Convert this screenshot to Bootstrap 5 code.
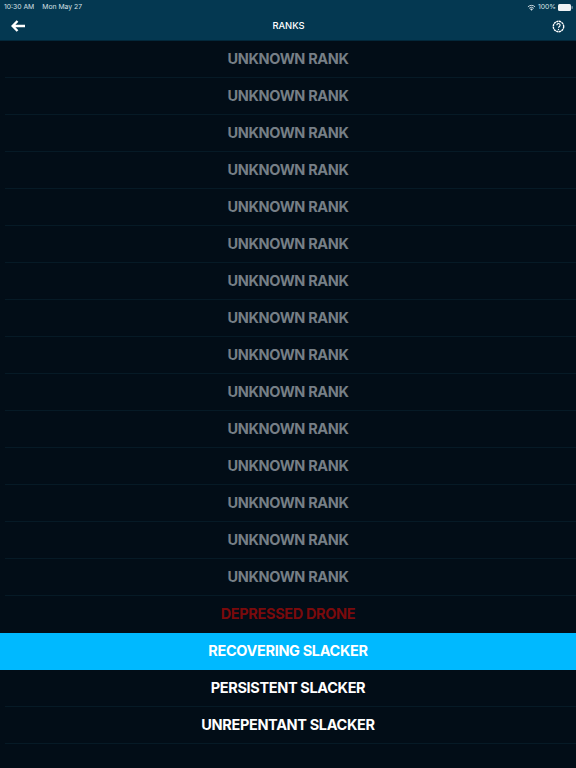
<!DOCTYPE html>
<html lang="en">
<head>
  <meta charset="UTF-8">
  <title>Ranks</title>
  <link href="https://cdn.jsdelivr.net/npm/bootstrap@5.3.0/dist/css/bootstrap.min.css" rel="stylesheet">
  <style>
    html, body { height: 100%; }
    body {
      background-color: #020d17;
      font-family: Inter, "Liberation Sans", sans-serif;
      overflow: hidden;
    }
    .top-head {
      background-color: #043851;
      height: 41px;
      border-bottom: 1px solid #03283b;
      color: #fff;
    }
    .status-line {
      height: 13px;
      padding: 1px 3px 0 4px;
      font-size: 6.8px;
      color: #d5e0e6;
    }
    .status-right { gap: 2px; }
    .title-line { height: 26px; padding: 0 11px 0 11px; }
    .page-name { font-size: 9.4px; font-weight: 500; padding-top: 1px; }
    .rank-row {
      height: 37px;
      font-size: 14.5px;
      font-weight: 700;
      letter-spacing: -0.35px;
      padding-bottom: 2px;
    }
    .rank-row::after {
      content: "";
      position: absolute;
      left: 5px;
      right: 0;
      bottom: 0;
      height: 1px;
      background-color: #061a26;
    }
    .rank-unknown { color: #767f86; }
    .rank-low { color: #7a0a0c; }
    .rank-known { color: #fff; }
    .rank-current { background-color: #00b9ff; color: #fff; }
    .rank-current::after, .rank-before::after { display: none; }
  </style>
</head>
<body>

<!-- Header -->
<div class="top-head">
  <div class="status-line d-flex align-items-center justify-content-between">
    <div class="d-flex"><span>10:30 AM</span><span class="ms-2">Mon May 27</span></div>
    <div class="d-flex align-items-center status-right">
      <svg width="9" height="7" viewBox="0 0 10 8"><path d="M5 7.6 3.4 5.9a2.3 2.3 0 0 1 3.2 0z" fill="#d5e0e6"/><path d="M2.4 4.9a3.8 3.8 0 0 1 5.2 0M.9 3.2a6 6 0 0 1 8.2 0" fill="none" stroke="#d5e0e6" stroke-width="1.1"/></svg>
      <span>100%</span>
      <svg width="15" height="7" viewBox="0 0 15 7"><rect width="13" height="7" rx="1.5" fill="#eef3f5"/><rect x="13.5" y="2.2" width="1.2" height="2.6" fill="#8fa6b2"/></svg>
    </div>
  </div>
  <div class="title-line d-flex align-items-center justify-content-between">
    <svg width="14" height="12" viewBox="0 0 14 12"><path d="M6.5 1 1.6 6l4.9 5M2 6h12" fill="none" stroke="#fff" stroke-width="2.4"/></svg>
    <span class="page-name">RANKS</span>
    <svg width="13" height="13" viewBox="0 0 13 13">
      <circle cx="6.5" cy="6.5" r="5.2" fill="none" stroke="#fff" stroke-width="1.4" stroke-dasharray="2.2 .5"/>
      <path d="M4.9 5.2a1.6 1.6 0 1 1 2.5 1.3c-.6.4-.9.7-.9 1.3" fill="none" stroke="#fff" stroke-width="1.1"/>
      <circle cx="6.5" cy="9.5" r=".7" fill="#fff"/>
    </svg>
  </div>
</div>

<!-- Rank list -->
<div id="rankList"></div>

<script>
  const ranks = [];
  for (let i = 0; i < 15; i++) ranks.push(['UNKNOWN RANK', 'rank-unknown']);
  ranks.push(['DEPRESSED DRONE', 'rank-low rank-before']);
  ranks.push(['RECOVERING SLACKER', 'rank-current']);
  ranks.push(['PERSISTENT SLACKER', 'rank-known']);
  ranks.push(['UNREPENTANT SLACKER', 'rank-known']);

  const list = document.getElementById('rankList');
  ranks.forEach(r => {
    const div = document.createElement('div');
    div.className = 'rank-row position-relative d-flex align-items-center justify-content-center ' + r[1];
    div.textContent = r[0];
    list.appendChild(div);
  });
</script>
<script src="https://cdn.jsdelivr.net/npm/bootstrap@5.3.0/dist/js/bootstrap.bundle.min.js"></script>
</body>
</html>
